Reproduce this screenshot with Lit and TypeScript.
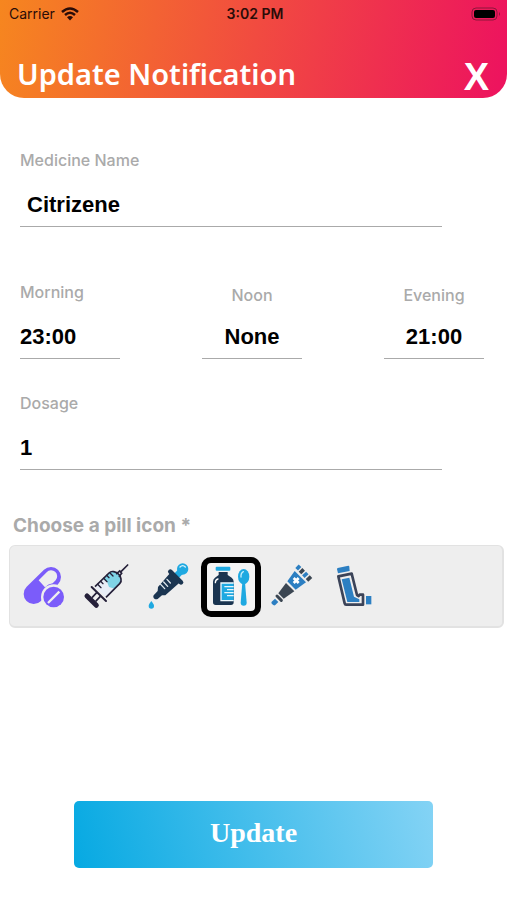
import { LitElement, html, svg, css } from "lit";
import { customElement, state } from "lit/decorators.js";

const icons = [
  {
    name: "Pills",
    art: svg`
      <path d="M56 111 108 60" stroke="#7b5cfa" stroke-width="60" stroke-linecap="round"/>
      <path d="M71 70 95 46A18 18 0 0 1 122 70L113 79A40 40 0 0 0 90 91Z" fill="#eee"/>
      <circle cx="116" cy="120" r="38" fill="#eee"/>
      <circle cx="116" cy="120" r="31" fill="#7b5cfa"/>
      <path d="M99 138 133 104" stroke="#eee" stroke-width="7"/>`,
  },
  {
    name: "Syringe",
    art: svg`
      <path d="M54 89 96 48Q102 42 110 44L120 47 129 56 132 66Q134 74 128 80L87 121Z" fill="#e9eef7"/>
      <path d="M78 66 96 48Q102 42 110 44L120 47 129 56 132 66Q134 74 128 80L113 95 96 90 90 74Z" fill="#7fd3e6"/>
      <path d="M54 89 96 48Q102 42 110 44L120 47 129 56 132 66Q134 74 128 80L87 121" fill="none" stroke="#252039" stroke-width="5"/>
      <path d="M119 50 128 42 134 49 127 58M132 44 152 24" fill="none" stroke="#252039" stroke-width="5" stroke-linecap="round"/>
      <path d="M62 82 72 92M71 73 78 80M80 64 90 74M89 55 96 62M99 48 108 57" stroke="#252039" stroke-width="4" stroke-linecap="round"/>
      <path d="M44 90 87 132" stroke="#252039" stroke-width="6" stroke-linecap="round"/>
      <path d="M59 107 45 122M70 118 56 133" stroke="#252039" stroke-width="5"/>
      <path d="M30 117 58 145" stroke="#252039" stroke-width="15" stroke-linecap="round"/>`,
  },
  {
    name: "Dropper",
    art: svg`
      <path d="M131 37 112 57" stroke="#1fa9e1" stroke-width="19"/>
      <circle cx="131" cy="36" r="17" fill="#1fa9e1"/>
      <path d="M123 30Q131 22 139 30" fill="none" stroke="#d9f2fb" stroke-width="4" stroke-linecap="round"/>
      <path d="M94 44 126 76" stroke="#1b3551" stroke-width="14" stroke-linecap="round"/>
      <path d="M94 47 123 76 79 115 69 115 56 126C48 130 40 122 44 115L56 102 57 90Z" fill="#1b3551"/>
      <path d="M65 82 77 95M74 75 86 88M84 67 94 78" stroke="#dfe7ee" stroke-width="4" stroke-linecap="round"/>
      <path d="M37 132C43 140 45 143 45 147A8 8 0 0 1 29 147C29 143 31 140 37 132Z" fill="#1fa9e1"/>`,
  },
  {
    name: "Syrup",
    art: svg`
      <rect x="44" y="29" width="44" height="12" rx="3" fill="#1fa9e1"/>
      <path d="M53 45H80V54L92 62Q98 66 98 74V136Q98 144 90 144H44Q36 144 36 136V74Q36 66 42 62L53 54Z" fill="#1b3551"/>
      <path d="M43 77Q43 68 51 66" fill="none" stroke="#fff" stroke-width="4" stroke-linecap="round"/>
      <path d="M98 78H60V131H98" fill="#1fa9e1" stroke="#eefaff" stroke-width="4"/>
      <path d="M70 89H98M78 98H98M70 107H98M78 116H98" stroke="#e6f7fd" stroke-width="4"/>
      <path d="M124 76 119 137Q119 146 128 146T137 137L132 76Z" fill="#1fa9e1"/>
      <ellipse cx="128" cy="59" rx="17" ry="23" fill="#1fa9e1"/>
      <path d="M120 60Q119 48 127 44" fill="none" stroke="#c9effc" stroke-width="4" stroke-linecap="round"/>`,
  },
  {
    name: "Ointment",
    art: svg`
      <path d="M26 134 36 125 46 135 37 144Q33 147 28 142T26 134Z" fill="#2c7fc2"/>
      <path d="M42 117 55 130" stroke="#3b4652" stroke-width="9" stroke-linecap="round"/>
      <path d="M46 109 69 78 94 103 62 125Z" fill="#3b4652"/>
      <path d="M73 73 95 42 129 76 98 98Z" fill="#2c7fc2"/>
      <path d="M92 63 107 78M107 63 92 78" stroke="#fff" stroke-width="8"/>
      <path d="M101 37 111 26" stroke="#2c7fc2" stroke-width="11"/>
      <path d="M111 48 122 37" stroke="#3b4652" stroke-width="11"/>
      <path d="M121 59 133 48" stroke="#2c7fc2" stroke-width="11"/>
      <path d="M132 70 144 59" stroke="#3b4652" stroke-width="11"/>`,
  },
  {
    name: "Inhaler",
    art: svg`
      <path d="M38 33 70 26Q73 26 73 30L74 42 39 49 36 37Q36 34 38 33Z" fill="#2c7fc2"/>
      <path d="M40 58 80 50 96 114 101 117 104 113H114V143H63Q60 143 59 139Z" fill="none" stroke="#3b4358" stroke-width="8" stroke-linejoin="round"/>
      <path d="M50 67 73 62 87 119 103 127V135H67Z" fill="#2c7fc2"/>
      <rect x="123" y="117" width="16" height="25" fill="#2c7fc2"/>`,
  },
];

@customElement("app-root")
export class AppRoot extends LitElement {
  @state() private selected = 3;

  static styles = css`
    :host {
      display: flex;
      flex-direction: column;
      min-height: 100vh;
      background: #fff;
      color: #000;
      font-family: "Liberation Sans", sans-serif;
    }
    * {
      box-sizing: border-box;
    }
    .header {
      height: 98px;
      border-radius: 0 0 24px 24px;
      background: linear-gradient(100deg, #f6861f 0%, #f14b40 50%, #ed145e 98%);
    }
    .status {
      display: grid;
      grid-template-columns: 1fr auto 1fr;
      align-items: center;
      height: 27px;
      padding: 0 6px 0 9px;
      font-family: Inter, sans-serif;
      font-size: 14px;
      color: #2a0c08;
    }
    .carrier {
      display: flex;
      align-items: center;
      gap: 6px;
    }
    .clock {
      font-weight: 600;
    }
    .battery {
      justify-self: end;
    }
    .bar {
      display: flex;
      align-items: flex-end;
      justify-content: space-between;
      height: 71px;
      padding: 0 18px 1px 17px;
      color: #fff;
    }
    .title {
      margin: 0;
      padding-bottom: 3px;
      font: 600 29px/40px "Noto Sans", sans-serif;
    }
    .close {
      padding: 0;
      border: 0;
      background: none;
      color: inherit;
      font: bold 38px/40px "Liberation Sans", sans-serif;
    }
    .form {
      flex: 1;
      display: flex;
      flex-direction: column;
      padding-top: 50px;
    }
    .fields {
      padding: 0 23px 0 20px;
    }
    .field {
      display: flex;
      flex-direction: column;
      width: 91%;
    }
    .label {
      font: 500 16px/24px Inter, sans-serif;
      color: #aaa;
    }
    .input {
      width: 100%;
      height: 44px;
      margin-top: 11px;
      padding: 0;
      border: 0;
      border-bottom: 1px solid #aaa;
      border-radius: 0;
      background: none;
      font: bold 22px/28px "Liberation Sans", sans-serif;
      color: #000;
      outline: none;
    }
    .name {
      padding-left: 7px;
    }
    .times {
      display: flex;
      justify-content: space-between;
      align-items: flex-end;
      margin: 53px 0 32px;
    }
    .time {
      width: 100px;
    }
    .centered {
      text-align: center;
    }
    .centered .input {
      margin-top: 8px;
      text-align: center;
    }
    .picker {
      margin: 43px 3px 0 9px;
      padding: 0;
      border: 0;
      min-width: 0;
    }
    .legend {
      padding: 0 4px;
      font: bold 19px/26px Inter, sans-serif;
      color: #aaa;
    }
    .icons {
      display: flex;
      gap: 2px;
      margin-top: 6px;
      padding: 11px 5px 9px;
      border: 1px solid #e2e2e2;
      border-right-width: 2px;
      border-bottom-width: 2px;
      border-radius: 6px;
      background: #eee;
    }
    .choice {
      position: relative;
      width: 60px;
      height: 60px;
    }
    .radio {
      position: absolute;
      inset: 0;
      width: 60px;
      height: 60px;
      margin: 0;
      appearance: none;
      border-radius: 10px;
    }
    .radio:checked {
      border: 6px solid #000;
      background: #f4f4f4;
    }
    .art {
      position: relative;
      display: block;
      pointer-events: none;
    }
    .update {
      width: 71%;
      height: 67px;
      margin: auto auto 32px;
      padding: 0 0 4px;
      border: 0;
      border-radius: 5px;
      background: linear-gradient(75deg, #06a9e2, #84d3f5);
      color: #fff;
      font: bold 28px/32px "Liberation Serif", serif;
    }
  `;

  private field(id: string, label: string, value: string, kind = "", inputKind = "") {
    return html`<div class="field ${kind}">
      <label class="label" for=${id}>${label}</label>
      <input class="input ${inputKind}" id=${id} type="text" .value=${value} />
    </div>`;
  }

  render() {
    return html`
      <header class="header">
        <div class="status">
          <span class="carrier">Carrier
            <svg width="18" height="14" viewBox="0 0 18 14" fill="none" stroke="#2a0c08" stroke-width="2.5" aria-hidden="true">
              <path d="M1 5Q9-2 17 5M4 8Q9 3.600 14 8"/>
              <path d="M6 10.200Q9 8 12 10.200L9 13.500Z" fill="#2a0c08" stroke="none"/>
            </svg>
          </span>
          <span class="clock">3:02 PM</span>
          <svg class="battery" width="30" height="14" viewBox="0 0 30 14" aria-hidden="true">
            <rect x="1" y="1" width="25" height="12" rx="4" fill="none" stroke="#8d163b"/>
            <rect x="3" y="3" width="21" height="8" rx="2"/>
            <path d="M28 5Q30 7 28 9Z" fill="#8d163b"/>
          </svg>
        </div>
        <div class="bar">
          <h1 class="title">Update Notification</h1>
          <button class="close" type="button" aria-label="Close">X</button>
        </div>
      </header>
      <form class="form" @submit=${(e: Event) => e.preventDefault()}>
        <div class="fields">
          ${this.field("medicine", "Medicine Name", "Citrizene", "", "name")}
          <div class="times">
            ${this.field("morning", "Morning", "23:00", "time")}
            ${this.field("noon", "Noon", "None", "time centered")}
            ${this.field("evening", "Evening", "21:00", "time centered")}
          </div>
          ${this.field("dosage", "Dosage", "1")}
        </div>
        <fieldset class="picker">
          <legend class="legend">Choose a pill icon *</legend>
          <div class="icons">
            ${icons.map(
              (icon, i) => html`<label class="choice">
                <input class="radio" type="radio" name="icon" aria-label=${icon.name}
                  .checked=${i === this.selected} @change=${() => (this.selected = i)} />
                <svg class="art" width="60" height="60" viewBox="0 0 180 180" fill="none" aria-hidden="true">${icon.art}</svg>
              </label>`
            )}
          </div>
        </fieldset>
        <button class="update" type="submit">Update</button>
      </form>
    `;
  }
}
